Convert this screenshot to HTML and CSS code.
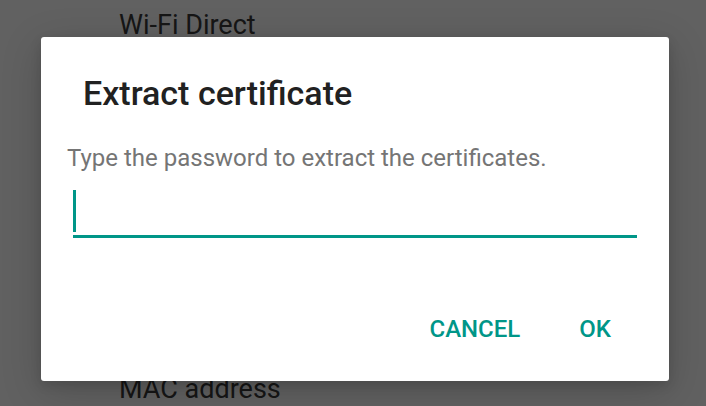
FILE: index.html
```html
<!DOCTYPE html>
<html>
<head>
<meta charset="utf-8">
<link rel="stylesheet" href="styles.css">
</head>
<body>
<div class="screen">
  <div class="list">
    <div class="item item-top">Wi-Fi Direct</div>
    <div class="item item-bottom">MAC address</div>
  </div>
  <div class="scrim"></div>
  <div class="dialog">
    <h1 class="title">Extract certificate</h1>
    <p class="message">Type the password to extract the certificates.</p>
    <div class="field">
      <span class="cursor"></span>
    </div>
    <div class="actions">
      <button class="btn">CANCEL</button>
      <button class="btn">OK</button>
    </div>
  </div>
</div>
</body>
</html>
```

FILE: styles.css
```css
html, body {
  margin: 0;
  padding: 0;
}
body {
  width: 706px;
  height: 406px;
  overflow: hidden;
  font-family: Roboto, "Liberation Sans", sans-serif;
  background: #606060;
}
.screen {
  position: relative;
  width: 706px;
  height: 406px;
  background: #ffffff;
}
.list {
  height: 406px;
  display: flex;
  flex-direction: column;
  justify-content: space-between;
  padding-left: 119px;
  box-sizing: border-box;
}
.item {
  font-size: 27px;
  color: #3a3a3a;
  line-height: 32px;
}
.item-top {
  margin-top: 9px;
}
.item-bottom {
  margin-bottom: 1px;
}
.scrim {
  position: absolute;
  inset: 0;
  background: rgba(0, 0, 0, 0.62);
}
.dialog {
  position: absolute;
  left: 41px;
  top: 37px;
  width: 628px;
  height: 344px;
  background: #ffffff;
  border-radius: 3px;
  box-shadow: 0 10px 40px rgba(0, 0, 0, 0.18), 0 4px 12px rgba(0, 0, 0, 0.12);
  box-sizing: border-box;
  display: flex;
  flex-direction: column;
}
.title {
  margin: 0;
  padding: 36px 0 0 42px;
  font-size: 34px;
  line-height: 40px;
  font-weight: 500;
  color: #212121;
}
.message {
  margin: 0;
  padding: 31px 0 0 26px;
  font-size: 24px;
  line-height: 28px;
  color: #757575;
}
.field {
  margin: 18px 32px 0 32px;
  height: 45px;
  border-bottom: 3px solid #009688;
  display: flex;
  align-items: flex-start;
}
.cursor {
  display: block;
  width: 3px;
  height: 42px;
  background: #009688;
}
.actions {
  margin-top: auto;
  padding: 0 58px 38px 0;
  display: flex;
  justify-content: flex-end;
  gap: 59px;
}
.btn {
  border: 0;
  background: none;
  padding: 0;
  font-family: Roboto, "Liberation Sans", sans-serif;
  font-size: 24px;
  font-weight: 500;
  line-height: 28px;
  color: #009688;
}
```
